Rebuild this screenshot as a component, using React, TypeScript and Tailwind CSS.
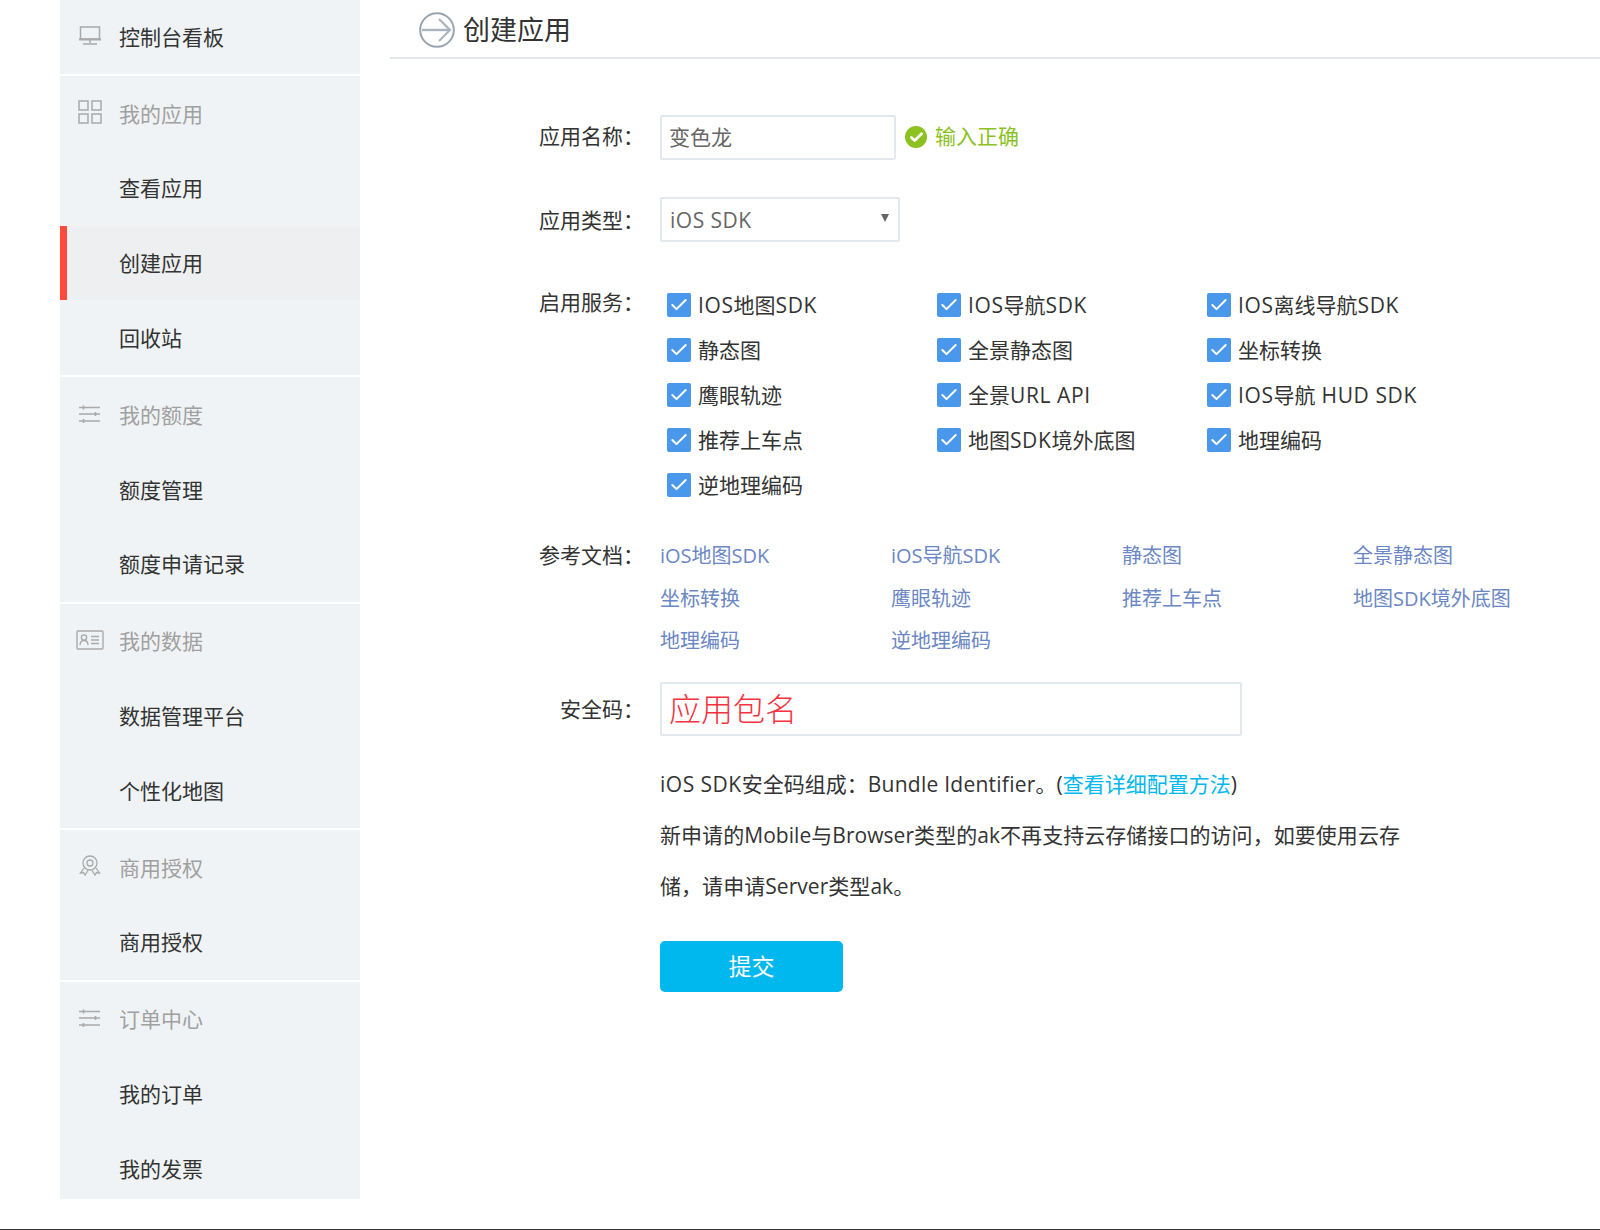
import { Check } from 'lucide-react';

const font = { fontFamily: '"Open Sans", "Noto Sans CJK SC", sans-serif' };

function MonitorIcon() {
  return (
    <svg width="24" height="20" viewBox="0 0 24 20" fill="none" stroke="#a9a9a9" strokeWidth="1.5">
      <rect x="2.5" y="1" width="19" height="12" />
      <path d="M1 13.5h22" strokeWidth="2" />
      <path d="M12 14v3M5 18h14" />
    </svg>
  );
}

function GridIcon() {
  return (
    <svg width="24" height="24" viewBox="0 0 24 24" fill="none" stroke="#a9a9a9" strokeWidth="1.5">
      <rect x="1" y="1" width="9" height="9" />
      <rect x="14" y="1" width="9" height="9" />
      <rect x="1" y="14" width="9" height="9" />
      <rect x="14" y="14" width="9" height="9" />
    </svg>
  );
}

function SlidersIcon() {
  return (
    <svg width="22" height="18" viewBox="0 0 22 18" fill="none" stroke="#a9a9a9" strokeWidth="1.4">
      <path d="M0 2.5h21M0 9h21M0 16h21" />
      <path d="M4.5 0.5v4M16.5 7v4M4.5 14v4" strokeWidth="1.6" />
    </svg>
  );
}

function CardIcon() {
  return (
    <svg width="28" height="20" viewBox="0 0 28 20" fill="none" stroke="#a9a9a9" strokeWidth="1.4">
      <rect x="1" y="1" width="26" height="18" rx="1" />
      <circle cx="8" cy="7.5" r="2.6" />
      <path d="M4 15c0-3 1.5-4.5 4-4.5s4 1.5 4 4.5" />
      <path d="M15 6.5h8M15 10h8M15 13.5h8" />
    </svg>
  );
}

function AwardIcon() {
  return (
    <svg width="22" height="22" viewBox="0 0 22 22" fill="none" stroke="#a9a9a9" strokeWidth="1.3">
      <circle cx="11" cy="8" r="7" />
      <circle cx="11" cy="8" r="3" />
      <path d="M5 13l-3.5 5 3-0.5 1.5 2.5 3-4.5M17 13l3.5 5-3-0.5-1.5 2.5-3-4.5" />
    </svg>
  );
}

function ArrowCircle() {
  return (
    <svg width="36" height="36" viewBox="0 0 36 36" fill="none">
      <circle cx="18" cy="18" r="16.8" stroke="#98a4ae" strokeWidth="2" />
      <path d="M3 18h28" stroke="#a9b4bd" strokeWidth="2.4" />
      <path d="M20 7l11 11-11 11" stroke="#a9b4bd" strokeWidth="2.2" />
    </svg>
  );
}

const groups = [
  { icon: <MonitorIcon />, title: '控制台看板', dark: true, items: [] as string[] },
  { icon: <GridIcon />, title: '我的应用', items: ['查看应用', '创建应用', '回收站'] },
  { icon: <SlidersIcon />, title: '我的额度', items: ['额度管理', '额度申请记录'] },
  { icon: <CardIcon />, title: '我的数据', items: ['数据管理平台', '个性化地图'] },
  { icon: <AwardIcon />, title: '商用授权', items: ['商用授权'] },
  { icon: <SlidersIcon />, title: '订单中心', items: ['我的订单', '我的发票'] },
];

const services = [
  'IOS地图SDK', 'IOS导航SDK', 'IOS离线导航SDK',
  '静态图', '全景静态图', '坐标转换',
  '鹰眼轨迹', '全景URL API', 'IOS导航 HUD SDK',
  '推荐上车点', '地图SDK境外底图', '地理编码',
  '逆地理编码',
];

const docs = [
  'iOS地图SDK', 'iOS导航SDK', '静态图', '全景静态图',
  '坐标转换', '鹰眼轨迹', '推荐上车点', '地图SDK境外底图',
  '地理编码', '逆地理编码',
];

// the capitals run a bit wider in the reference than in Open Sans
function ServiceName({ name }: { name: string }) {
  return (
    <span className="pt-[1px]">
      {name.split(/([A-Z ]+)/).map((part, i) =>
        i % 2 ? <span key={i} className="tracking-[0.6px]">{part}</span> : part
      )}
    </span>
  );
}

function Sidebar() {
  return (
    <aside className="w-[300px] shrink-0 flex flex-col gap-[2px] h-[1199px] overflow-hidden">
      {groups.map((group) => (
        <div key={group.title} className="bg-[#f0f3f5]">
          <div className={`relative flex items-center pl-[59px] pt-[2px] text-[21px] ${group.dark ? 'h-[74px]' : 'h-[74.8px]'}`}>
            <span className="absolute left-[14px] top-0 h-full w-[32px] flex items-center justify-center -translate-y-[1px]">
              {group.icon}
            </span>
            <span className={group.dark ? 'text-[#333]' : 'text-[#a0a0a0]'}>{group.title}</span>
          </div>
          {group.items.map((item) => (
            <div
              key={item}
              className={`h-[74.8px] flex items-center pt-[2px] text-[21px] text-[#333] ${
                item === '创建应用' ? 'bg-[#edeff1] border-l-[7px] border-[#ff4a3d] pl-[52px]' : 'pl-[59px]'
              }`}
            >
              {item}
            </div>
          ))}
        </div>
      ))}
    </aside>
  );
}

function Label({ children }: { children: string }) {
  return <div className="w-[254px] shrink-0 text-right text-[21px] text-[#333] mr-[16px]">{children}</div>;
}

function CreateForm() {
  return (
    <div>
      <div className="flex items-center h-[45px] mb-[37px]">
        <div className="-mt-[2px]"><Label>应用名称：</Label></div>
        <div className="w-[236px] h-[45px] border-2 border-[#e3e8ee] rounded-[2px] flex items-center pl-[7px] pt-[1px] text-[21px] text-[#666]">变色龙</div>
        <span className="ml-[9px] w-[22px] h-[22px] -mt-[1px] rounded-full bg-[#8cc21f] flex items-center justify-center">
          <Check size={15} strokeWidth={4.5} color="#fff" />
        </span>
        <span className="ml-[8px] -mt-[2px] text-[21px] text-[#8cc21f]">输入正确</span>
      </div>

      <div className="flex items-center h-[45px] mb-[51px]">
        <div className="mt-[2px]"><Label>应用类型：</Label></div>
        <div className="relative w-[240px] h-[45px] border-2 border-[#e3e8ee] rounded-[2px] flex items-center pl-[8px] pt-[2px] text-[21px] tracking-[0.5px] text-[#666]">
          iOS SDK
          <span className="absolute right-[9px] top-[15px] w-0 h-0 border-x-[4.5px] border-t-[8px] border-x-transparent border-t-[#666]" />
        </div>
      </div>

      <div className="flex mb-[46px]">
        <div className="-mt-[6px]"><Label>启用服务：</Label></div>
        <div className="grid grid-cols-[270px_270px_270px] gap-y-[21px] pl-[7px] h-[204px]">
          {services.map((name) => (
            <div key={name} className="flex items-center h-[24px] text-[21px] text-[#333]">
              <span className="w-[24px] h-[24px] rounded-[2px] bg-[#4a98ec] flex items-center justify-center mr-[7px] shrink-0">
                <Check size={20} strokeWidth={2.4} color="#fff" />
              </span>
              <ServiceName name={name} />
            </div>
          ))}
        </div>
      </div>

      <div className="flex mb-[13.5px]">
        <div className="-mt-[3px]"><Label>参考文档：</Label></div>
        <div className="grid grid-cols-[231px_231px_231px_231px] auto-rows-[42.5px] -mt-[2px]">
          {docs.map((name) => (
            <a key={name} className="text-[20px] leading-[30px] text-[#6b87c4]">{name}</a>
          ))}
        </div>
      </div>

      <div className="flex items-center mb-[22px]">
        <div className="mt-[2px]"><Label>安全码：</Label></div>
        <div className="w-[582px] h-[54px] border-2 border-[#e3e8ee] rounded-[2px] flex items-center pl-[7px] pb-[1px] text-[32px] font-light text-[#f5333f]">应用包名</div>
      </div>

      <div className="pl-[270px] pt-[1px] w-[1022px] text-[21px] leading-[51px] text-[#333]">
        <p>
          <span className="tracking-[0.5px]">iOS SDK</span>安全码组成：<span className="tracking-[0.25px]">Bundle Identifier</span>。(<a className="text-[#00b7ee]">查看详细配置方法</a>)
        </p>
        <p className="tracking-[0.05px]">新申请的Mobile与Browser类型的ak不再支持云存储接口的访问，如要使用云存储，请申请Server类型ak。</p>
      </div>

      <div className="pl-[270px] mt-[29px]">
        <button className="w-[183px] h-[51px] rounded-[5px] bg-[#00b7ee] text-white text-[23px]">提交</button>
      </div>
    </div>
  );
}

export default function App() {
  return (
    <div style={font} className="h-[1230px] w-[1600px] bg-white flex flex-col overflow-hidden">
      <div className="flex flex-1 pl-[60px]">
        <Sidebar />
        <main className="ml-[30px] flex-1">
          <div className="h-[59px] pt-[3px] border-b-2 border-[#e3e6ea] flex items-center pl-[29px] gap-[8px] text-[27px] text-[#333]">
            <ArrowCircle />
            创建应用
          </div>
          <div className="pt-[56px]">
            <CreateForm />
          </div>
        </main>
      </div>
      <div className="h-[1px] bg-[#333]" />
    </div>
  );
}
